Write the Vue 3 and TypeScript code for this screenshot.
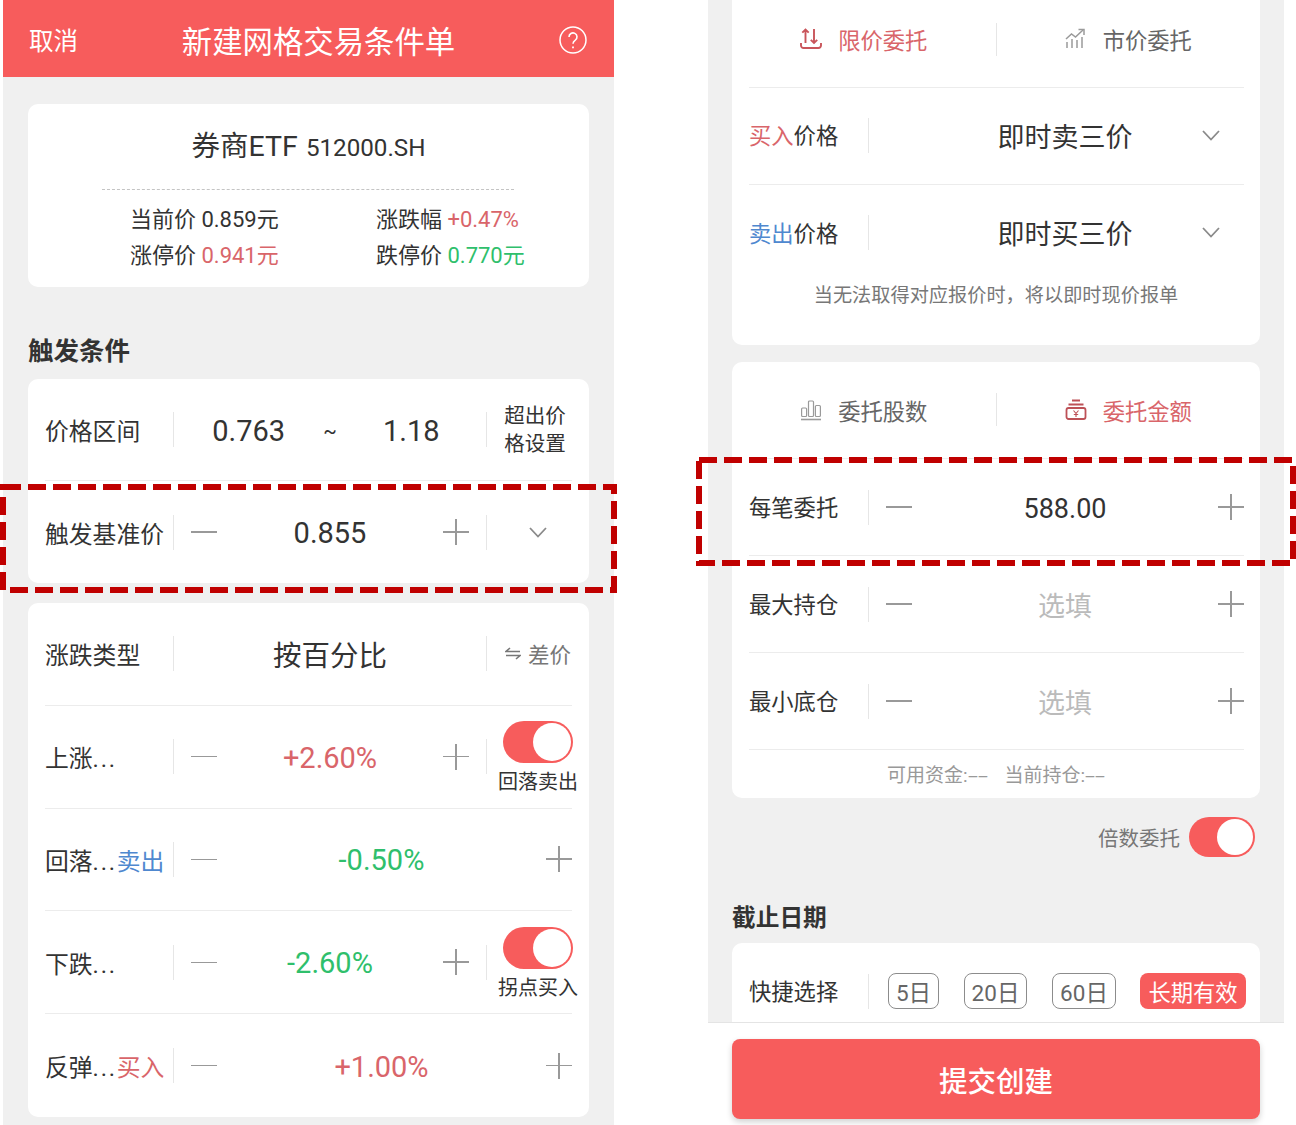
<script setup lang="ts">
interface StepRow {
  label: string
  tag?: string
  tagClass?: string
  value: string
  valueClass: string
  caption?: string
}

const stepRows: StepRow[] = [
  { label: '上涨', value: '+2.60%', valueClass: 'red', caption: '回落卖出' },
  { label: '回落', tag: '卖出', tagClass: 'blue', value: '-0.50%', valueClass: 'green' },
  { label: '下跌', value: '-2.60%', valueClass: 'green', caption: '拐点买入' },
  { label: '反弹', tag: '买入', tagClass: 'red', value: '+1.00%', valueClass: 'red' }
]

const amountRows = [
  { label: '每笔委托', value: '588.00', empty: false },
  { label: '最大持仓', value: '选填', empty: true },
  { label: '最小底仓', value: '选填', empty: true }
]

const chips = [
  { text: '5日', width: 51 },
  { text: '20日', width: 63 },
  { text: '60日', width: 64 }
]
</script>

<template>
  <div class="page">
    <section class="phone left">
      <header class="bar">
        <span class="cancel">取消</span>
        <span class="bar-title">新建网格交易条件单</span>
        <svg class="help" width="28" height="28" viewBox="0 0 28 28" fill="none" stroke="#fff">
          <circle cx="14" cy="14" r="13" stroke-width="1.5" />
          <path d="M10 11a4 4 0 1 1 6.3 3.2c-1.5 1-2.3 1.8-2.3 3.6" stroke-width="1.6" />
          <path d="M14 20.5v1.8" stroke-width="1.8" />
        </svg>
      </header>

      <div class="card quote">
        <div class="quote-title">券商ETF <small>512000.SH</small></div>
        <div class="dash"></div>
        <div class="stats">
          <div>当前价 0.859元</div>
          <div>涨跌幅 <span class="red">+0.47%</span></div>
          <div>涨停价 <span class="red">0.941元</span></div>
          <div>跌停价 <span class="green">0.770元</span></div>
        </div>
      </div>

      <h2 class="section-l">触发条件</h2>

      <div class="card">
        <div class="row-l compact line">
          <div class="label-l">价格区间</div>
          <i class="vline"></i>
          <div class="range">
            <span>0.763</span>
            <em>~</em>
            <span>1.18</span>
          </div>
          <i class="vline"></i>
          <div class="side"><span class="over">超出价<br />格设置</span></div>
        </div>
        <div class="row-l compact">
          <div class="label-l">触发基准价</div>
          <i class="vline"></i>
          <div class="stepper">
            <i class="minus"></i>
            <span class="val-l">0.855</span>
            <i class="plus"></i>
          </div>
          <i class="vline"></i>
          <div class="side">
            <svg width="18" height="11" viewBox="0 0 18 11" fill="none" stroke="#8a8a8a" stroke-width="1.8">
              <path d="M1 1l8 8.500L17 1" />
            </svg>
          </div>
        </div>
      </div>

      <div class="card gap-card">
        <div class="row-l line">
          <div class="label-l">涨跌类型</div>
          <i class="vline"></i>
          <div class="kind">按百分比</div>
          <i class="vline"></i>
          <div class="side swap">
            <svg width="16" height="13" viewBox="0 0 16 13" fill="none" stroke="#777" stroke-width="1.6">
              <path d="M5 1L1 4.500h14" />
              <path d="M1 8.500h14l-4 3.500" />
            </svg>
            <span>差价</span>
          </div>
        </div>
        <div v-for="(r, i) in stepRows" :key="r.label" class="row-l" :class="{ line: i < stepRows.length - 1 }">
          <div class="label-l">
            {{ r.label }}<span class="dots">...</span><span v-if="r.tag" :class="r.tagClass">{{ r.tag }}</span>
          </div>
          <i class="vline"></i>
          <div class="stepper" :class="{ wide: !r.caption }">
            <i class="minus"></i>
            <span class="val-l" :class="r.valueClass">{{ r.value }}</span>
            <i class="plus"></i>
          </div>
          <template v-if="r.caption">
            <i class="vline"></i>
            <div class="side toggle-side">
              <span class="switch big"><b></b></span>
              <span class="caption">{{ r.caption }}</span>
            </div>
          </template>
        </div>
      </div>
    </section>

    <section class="phone right">
      <div class="scroll">
        <div class="card-r first">
          <div class="tabs line first-tabs">
            <div class="tab red">
              <svg width="22" height="22" viewBox="0 0 22 22" fill="none" stroke="#c9555b" stroke-width="1.9">
                <path d="M5.500 15V1.500M2.300 4.700l3.200-3.200 3.200 3.200" />
                <path d="M14 1v14M10.800 11.800L14 15l3.200-3.200" />
                <path d="M1 15v2.500A2.500 2.500 0 0 0 3.500 20h15a2.500 2.500 0 0 0 2.500-2.500V15" />
              </svg>
              <span>限价委托</span>
            </div>
            <i class="vline tabline"></i>
            <div class="tab grey">
              <svg width="22" height="22" viewBox="0 0 22 22" fill="none" stroke="#9a9a9a" stroke-width="1.5">
                <path d="M2 20v-6M7 20v-9M12 20v-8M17 20V9" />
                <path d="M1 11l5.500-5 4 3L18 2" />
                <path d="M13.500 1.500H19V7" />
              </svg>
              <span>市价委托</span>
            </div>
          </div>
          <div class="row-r line">
            <div class="label-r"><span class="red">买入</span>价格</div>
            <i class="vline"></i>
            <div class="select">
              <span>即时卖三价</span>
              <svg width="18" height="11" viewBox="0 0 18 11" fill="none" stroke="#8a8a8a" stroke-width="1.8">
                <path d="M1 1l8 8.500L17 1" />
              </svg>
            </div>
          </div>
          <div class="row-r">
            <div class="label-r"><span class="blue">卖出</span>价格</div>
            <i class="vline"></i>
            <div class="select">
              <span>即时买三价</span>
              <svg width="18" height="11" viewBox="0 0 18 11" fill="none" stroke="#8a8a8a" stroke-width="1.8">
                <path d="M1 1l8 8.500L17 1" />
              </svg>
            </div>
          </div>
          <p class="note">当无法取得对应报价时，将以即时现价报单</p>
        </div>

        <div class="card-r second">
          <div class="tabs line">
            <div class="tab grey">
              <svg width="22" height="22" viewBox="0 0 22 22" fill="none" stroke="#9a9a9a" stroke-width="1.2">
                <rect x="1.600" y="9" width="5" height="8.500" rx="1" />
                <rect x="8.500" y="2" width="5" height="15.500" rx="1" />
                <rect x="15.400" y="6.500" width="5" height="11" rx="1" />
                <path d="M1 20.500h20" stroke-width="1.600" />
              </svg>
              <span>委托股数</span>
            </div>
            <i class="vline tabline"></i>
            <div class="tab red">
              <svg width="22" height="22" viewBox="0 0 22 22" fill="none" stroke="#bd5157" stroke-width="1.800">
                <path d="M7 1.500h8M3.500 5.500h15" />
                <rect x="1.500" y="9" width="19" height="11" rx="2" />
                <path d="M8.500 11.500l2.500 3 2.500-3M11 14.500v3.500M8.800 15.500h4.400" stroke-width="1.100" />
              </svg>
              <span>委托金额</span>
            </div>
          </div>
          <div v-for="r in amountRows" :key="r.label" class="row-r line">
            <div class="label-r">{{ r.label }}</div>
            <i class="vline"></i>
            <div class="stepper wide r">
              <i class="minus"></i>
              <span class="val-r" :class="{ empty: r.empty }">{{ r.value }}</span>
              <i class="plus"></i>
            </div>
          </div>
          <div class="funds">
            <span>可用资金:<span class="dd">--</span></span>
            <span>当前持仓:<span class="dd">--</span></span>
          </div>
        </div>

        <div class="multi">
          <span>倍数委托</span>
          <span class="switch small"><b></b></span>
        </div>

        <h2 class="section-r">截止日期</h2>

        <div class="card-r">
          <div class="row-r quick">
            <div class="label-r">快捷选择</div>
            <i class="vline"></i>
            <div class="chips">
              <span v-for="c in chips" :key="c.text" class="chip" :style="{ width: c.width + 'px' }">{{ c.text }}</span>
              <span class="chip on">长期有效</span>
            </div>
          </div>
        </div>
      </div>

      <footer class="foot">
        <button class="submit" type="button">提交创建</button>
      </footer>
    </section>

    <svg class="mark mark-l" width="617" height="109" viewBox="0 0 617 109" fill="none">
      <rect x="3" y="3" width="611" height="103" stroke="#c00000" stroke-width="6" stroke-dasharray="18 7" />
    </svg>
    <svg class="mark mark-r" width="600" height="109" viewBox="0 0 600 109" fill="none">
      <rect x="3" y="3" width="594" height="103" stroke="#c00000" stroke-width="6" stroke-dasharray="18 7" />
    </svg>
  </div>
</template>

<style>
html,
body {
  margin: 0;
  background: #fff;
}
</style>

<style scoped>
.page {
  position: relative;
  display: flex;
  gap: 94px;
  width: 1296px;
  height: 1125px;
  padding-left: 3px;
  box-sizing: border-box;
  overflow: hidden;
  background: #fff;
  color: #333;
  font-family: Roboto, "Noto Sans CJK SC", sans-serif;
}
.phone {
  height: 1125px;
  background: #f0f0f0;
  flex: none;
}
.left {
  width: 611px;
}
.right {
  width: 576px;
  display: flex;
  flex-direction: column;
}
.red {
  color: #d9656a;
}
.green {
  color: #2fbf6c;
}
.blue {
  color: #4f88cf;
}
.bar {
  height: 77px;
  box-sizing: border-box;
  padding: 2px 27px 0 26px;
  background: #f75c5c;
  color: #fff;
  display: flex;
  align-items: center;
}
.cancel {
  font-size: 24.500px;
}
.bar-title {
  flex: 1;
  text-align: center;
  font-size: 30.400px;
}
.card {
  margin: 0 25px;
  background: #fff;
  border-radius: 10px;
}
.quote {
  margin-top: 27px;
  height: 183px;
  box-sizing: border-box;
}
.quote-title {
  height: 85px;
  text-align: center;
  line-height: 86px;
  font-size: 28.500px;
}
.quote-title small {
  font-size: 24.200px;
  margin-left: 1px;
}
.dash {
  margin: 0 75px 0 74px;
  border-top: 1px dashed #c4c4c4;
}
.stats {
  display: grid;
  grid-template-columns: 246px 1fr;
  padding: 12px 0 0 102px;
  font-size: 22px;
  line-height: 36px;
}
.section-l {
  margin: 50px 0 14px 25px;
  font-size: 25.500px;
  line-height: 28px;
  font-weight: 700;
}
.gap-card {
  margin-top: 20px;
}
.row-l {
  height: 102.800px;
  margin: 0 17px;
  display: flex;
  align-items: center;
  box-sizing: border-box;
}
.row-l.compact {
  height: 102px;
}
.line {
  border-bottom: 1.500px solid #ececec;
}
.label-l {
  width: 128px;
  flex: none;
  font-size: 23.800px;
  white-space: nowrap;
}
.dots {
  letter-spacing: 1.800px;
}
.vline {
  flex: none;
  width: 1px;
  height: 35px;
  background: #e6e6e6;
}
.range {
  flex: 1;
  display: grid;
  grid-template-columns: 1fr 1fr 1fr;
  align-items: center;
  text-align: center;
  font-size: 29px;
  padding: 3px 34px 0;
}
.range em {
  font-style: normal;
  font-size: 20px;
}
.side {
  width: 85px;
  flex: none;
  display: flex;
  justify-content: center;
  padding-left: 17px;
  box-sizing: border-box;
  color: #333;
}
.over {
  font-size: 20.500px;
  line-height: 28px;
  margin-right: 6px;
  white-space: nowrap;
}
.swap {
  align-items: center;
  gap: 7px;
  font-size: 21.500px;
  color: #777;
}
.swap span {
  white-space: nowrap;
}
.stepper {
  flex: 1;
  display: flex;
  align-items: center;
  padding: 0 17px;
}
.stepper.wide {
  padding-right: 0;
}
.minus {
  flex: none;
  width: 26px;
  height: 1.500px;
  background: #999;
}
.plus {
  flex: none;
  position: relative;
  width: 26px;
  height: 26px;
}
.plus::before,
.plus::after {
  content: "";
  position: absolute;
  background: #999;
}
.plus::before {
  left: 0;
  right: 0;
  top: 12px;
  height: 1.500px;
}
.plus::after {
  top: 0;
  bottom: 0;
  left: 12px;
  width: 1.500px;
}
.val-l {
  flex: 1;
  text-align: center;
  font-size: 29px;
  padding-top: 2px;
}
.kind {
  flex: 1;
  text-align: center;
  font-size: 28.500px;
}
.toggle-side {
  flex-direction: column;
  align-items: center;
  padding: 2px 0 0;
  width: 80px;
  margin: 0 -6px 0 11px;
  gap: 7px;
}
.caption {
  font-size: 20px;
  line-height: 24px;
  white-space: nowrap;
}
.switch {
  display: block;
  position: relative;
  border-radius: 22px;
  background: #f75c5c;
  box-sizing: border-box;
  flex: none;
}
.switch b {
  position: absolute;
  top: 2px;
  right: 2px;
  border-radius: 50%;
  background: #fff;
}
.switch.big {
  width: 70px;
  height: 42px;
}
.switch.big b {
  width: 38px;
  height: 38px;
}
.switch.small {
  width: 66px;
  height: 40px;
}
.switch.small b {
  width: 36px;
  height: 36px;
}
.scroll {
  flex: 1;
  min-height: 0;
  overflow: hidden;
}
.card-r {
  margin: 0 24px;
  background: #fff;
  border-radius: 10px;
}
.card-r.first {
  height: 345px;
  border-radius: 0 0 10px 10px;
}
.card-r.second {
  margin-top: 17px;
  height: 436px;
}
.tabs {
  height: 97px;
  box-sizing: border-box;
  padding-bottom: 2px;
  display: flex;
  align-items: center;
  position: relative;
}
.tabs.line {
  border-bottom: 0;
}
.tabs.line::after {
  content: "";
  position: absolute;
  left: 17px;
  right: 16px;
  bottom: 0;
  height: 1.500px;
  background: #ececec;
}
.first-tabs {
  height: 88px;
  padding-bottom: 10px;
}
.tab {
  flex: 1;
  display: flex;
  align-items: center;
  justify-content: center;
  gap: 16px;
  font-size: 22.300px;
}
.tab.grey {
  color: #666;
}
.tabline {
  height: 33px;
}
.row-r {
  height: 97px;
  margin: 0 16px 0 17px;
  display: flex;
  align-items: center;
  box-sizing: border-box;
}
.first .row-r {
  padding-bottom: 2px;
}
.label-r {
  width: 119px;
  flex: none;
  font-size: 22.300px;
  padding-bottom: 2px;
  white-space: nowrap;
}
.select {
  flex: 1;
  display: grid;
  grid-template-columns: 43px 1fr 26px;
  align-items: center;
  font-size: 27px;
  text-align: center;
}
.select span {
  grid-column: 2;
}
.select svg {
  grid-column: 3;
  margin-left: -16px;
}
.val-r {
  flex: 1;
  text-align: center;
  font-size: 27px;
  padding-top: 3px;
}
.val-r.empty {
  color: #bbb;
  padding-top: 0;
}
.note {
  margin: 0;
  padding-top: 2px;
  text-align: center;
  font-size: 19.200px;
  line-height: 24px;
  color: #777;
}
.funds {
  display: flex;
  justify-content: center;
  gap: 17px;
  height: 48px;
  padding-top: 14px;
  box-sizing: border-box;
  font-size: 19px;
  line-height: 24px;
  color: #999;
}
.dd {
  display: inline-block;
  width: 20px;
  transform: scaleX(1.900);
  transform-origin: left;
}
.multi {
  display: flex;
  justify-content: flex-end;
  align-items: center;
  gap: 9px;
  margin: 19px 29px 0 0;
  font-size: 20.500px;
  color: #777;
}
.section-r {
  margin: 47px 0 11px 24px;
  font-size: 23.700px;
  line-height: 28px;
  font-weight: 700;
}
.quick {
  height: 96px;
}
.chips {
  display: flex;
  align-items: center;
  gap: 25px;
  margin-left: 19px;
  flex: 1;
}
.chip {
  height: 36px;
  box-sizing: border-box;
  display: flex;
  flex: none;
  align-items: center;
  justify-content: center;
  border: 1px solid #8c8c8c;
  border-radius: 8px;
  font-size: 22.500px;
  color: #666;
}
.chip.on {
  width: 106px;
  margin-left: -1px;
  border: 0;
  background: #f75c5c;
  color: #fff;
  font-size: 22.300px;
}
.foot {
  flex: none;
  height: 103px;
  background: #fff;
  border-top: 1px solid #e4e4e4;
  box-sizing: border-box;
  padding: 16px 24px 0;
}
.submit {
  display: block;
  width: 100%;
  height: 80px;
  border: 0;
  border-radius: 8px;
  background: #f75c5c;
  box-shadow: 0 3px 6px rgba(0, 0, 0, 0.18);
  color: #fff;
  font-family: inherit;
  font-size: 28.500px;
  font-weight: 500;
}
.mark {
  position: absolute;
  pointer-events: none;
}
.mark-l {
  left: 0;
  top: 484px;
}
.mark-r {
  left: 696px;
  top: 457px;
}
</style>
